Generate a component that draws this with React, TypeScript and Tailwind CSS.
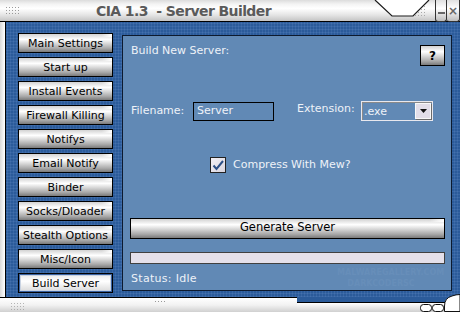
import React from 'react';

// --- skin pieces ---
const btnSkin =
  'border border-black bg-[linear-gradient(to_bottom,#d2d2d2_0%,#ffffff_30%,#d4d4d4_55%,#a8a8a8_80%,#7a7a7a_100%)] text-black';

const Dots = ({ className = '' }: { className?: string }) => (
  <svg className={className} width="16" height="9" viewBox="0 0 16 9">
    {[0, 1, 2].map((r) =>
      [0, 1, 2, 3, 4].map((c) => (
        <rect key={`${r}-${c}`} x={c * 3 + 1} y={r * 3 + 1} width="1" height="1" fill="#9a9a9a" />
      ))
    )}
  </svg>
);

const SkinButton = ({ label, active }: { label: string; active?: boolean }) => (
  <div
    className={`h-[20px] w-[95px] flex items-center justify-center text-[11px] leading-none relative ${
      active
        ? 'border border-black bg-[linear-gradient(to_bottom,#e8e8e8_0%,#ffffff_40%,#d8d8d8_100%)] shadow-[inset_0_0_0_1px_#3b62a0,inset_0_0_0_2px_#c9d3e2]'
        : btnSkin
    }`}
  >
    {!active && <span className="absolute right-0 top-0 w-[10px] h-[3px] bg-[linear-gradient(to_right,transparent,#ffffff)]" />}
    {label}
  </div>
);

const menu = [
  'Main Settings',
  'Start up',
  'Install Events',
  'Firewall Killing',
  'Notifys',
  'Email Notify',
  'Binder',
  'Socks/Dloader',
  'Stealth Options',
  'Misc/Icon',
  'Build Server',
];

export default function App() {
  return (
    <div className="w-[460px] h-[312px] overflow-hidden bg-white flex flex-col relative" style={{ fontFamily: '"DejaVu Sans", Verdana, sans-serif' }}>
      {/* Title bar */}
      <div className="h-[22px] relative flex border-b border-black bg-[linear-gradient(to_bottom,#dcdcdc_0%,#f4f4f4_20%,#ffffff_40%,#e6e6e6_70%,#c4c4c4_100%)]">
        <Dots className="absolute left-[5px] top-[6px]" />
        <div className="flex-1 pl-[96px] pt-[1px] text-[14px] font-bold text-[#5a5a5a] tracking-[-0.6px] leading-[20px]">
          CIA 1.3&nbsp; - Server Builder
        </div>
        {/* notch */}
        <svg className="absolute left-[370px] top-0" width="66" height="22" viewBox="0 0 66 22">
          <polygon points="5,0 22,16 43,16 59,0" fill="#ffffff" />
          <polyline points="5,0 22,16 43,16 59,0" fill="none" stroke="#1a1a1a" strokeWidth="1.2" />
          {[0, 1, 2, 3].map((i) => (
            <g key={i}>
              {[0, 1, 2, 3].slice(0, i + 1).map((j) => (
                <rect key={j} x={60 - i * 3 + j * 3 - 6} y={6 + i * 3} width="1" height="1" fill="#aaa" />
              ))}
            </g>
          ))}
        </svg>
        <div className="flex absolute right-0 top-0 h-[22px]">
          <div className="w-[12px] h-[22px] border-l border-r border-b border-[#333] rounded-b-[3px] bg-[linear-gradient(to_bottom,#e0e0e0,#ffffff_40%,#bdbdbd)] flex items-center justify-center">
            <span className="w-[7px] h-[2px] bg-[#666] mt-[5px]" />
          </div>
          <div className="w-[13px] h-[22px] border-r border-b border-[#333] rounded-b-[3px] bg-[linear-gradient(to_bottom,#e0e0e0,#ffffff_40%,#bdbdbd)] flex items-center justify-center text-[12px] font-bold text-[#666] leading-none">
            ×
          </div>
        </div>
      </div>

      {/* Body */}
      <div className="h-[275px] flex">
        <div className="w-[6px] border-r border-black bg-[linear-gradient(to_right,#d8d8d8,#ffffff)]" />
        <div className="flex-1 flex pl-[12px] pt-[11px] pr-[8px] bg-[#2b5b9a] bg-[radial-gradient(circle,#4370ad_0.9px,transparent_1.1px)] bg-[length:3px_3px]">
          {/* left menu */}
          <div className="flex flex-col gap-[4px]">
            {menu.map((m) => (
              <SkinButton key={m} label={m} active={m === 'Build Server'} />
            ))}
          </div>

          {/* main panel */}
          <div className="ml-[9px] mt-[2px] w-[330px] h-[256px] border border-[#0d1a2e] bg-[#6189b5] text-[#eef2f8] text-[11px] flex flex-col pl-[7px] pr-[6px] relative">
            {/* watermark */}
            <div className="absolute left-[214px] top-[231px] w-[88px] text-[8px] font-bold text-[#678eb9] leading-[11px] text-center">
              MALWAREGALLERY.COM
              <br />
              DARKCODERSC
            </div>

            <div className="flex justify-between items-start pt-[9px]">
              <span className="ml-[1px] -mt-[1px] leading-[13px]">Build New Server:</span>
              <div className={`${btnSkin} w-[25px] h-[21px] flex items-center justify-center text-[12px] font-bold leading-none`}>?</div>
            </div>

            <div className="flex items-center mt-[35px] h-[20px]">
              <span className="w-[63px] pl-[1px]">Filename:</span>
              <div className="w-[81px] h-[19px] border border-black flex items-center pl-[3px] pt-[1px]">Server</div>
              <span className="ml-[23px] w-[64px] -mt-[3px]">Extension:</span>
              <div className="w-[72px] h-[20px] border border-[#e8e8ee] shadow-[inset_1px_1px_0_#8a8a8a] flex items-center">
                <span className="flex-1 pl-[2px] pt-[2px]">.exe</span>
                <div className="w-[16px] h-[16px] mr-[1px] bg-[#e2dee9] border border-[#f8f8f8] shadow-[1px_1px_0_#6b6b6b] flex items-center justify-center">
                  <svg width="7" height="4" viewBox="0 0 7 4">
                    <polygon points="0,0 7,0 3.5,4" fill="#111" />
                  </svg>
                </div>
              </div>
            </div>

            <div className="flex items-center mt-[36px] pl-[80px] gap-[7px]">
              <div className="w-[16px] h-[16px] border border-[#222] bg-[linear-gradient(to_bottom_right,#f2f0f5,#d8d4de)] flex items-center justify-center">
                <svg width="12" height="11" viewBox="0 0 12 11">
                  <polyline points="1.5,5.5 4.5,9 11,1" fill="none" stroke="#2c4f86" strokeWidth="2" />
                </svg>
              </div>
              <span className="text-[11px]">Compress With Mew?</span>
            </div>

            <div className={`${btnSkin} mt-[44px] h-[21px] flex items-center justify-center text-[11.5px] relative`}>
              <span className="absolute right-0 top-0 w-[14px] h-[3px] bg-[linear-gradient(to_right,transparent,#ffffff)]" />
              Generate Server
            </div>

            <div className="mt-[13px] h-[12px] border border-[#404040] bg-[#e4e0ea]" />

            <div className="mt-[8px] ml-[1px] text-[11px] tracking-[0.3px] leading-[14px]">Status: Idle</div>
          </div>
        </div>
      </div>

      {/* Bottom bar */}
      <div className="h-[15px] flex relative">
        <div className="w-[297px] border-t border-black bg-[linear-gradient(to_bottom,#ffffff,#f2f2f2_50%,#d0d0d0)] relative">
          <Dots className="absolute left-[10px] top-[4px] opacity-70" />
          <div className="absolute left-[155px] top-[3px] flex gap-[2px]">
            {[0, 1, 2, 3].map((i) => (
              <span key={i} className="w-[1px] h-[1px] bg-[#999]" />
            ))}
          </div>
        </div>
        <div className="flex-1 flex flex-col">
          <div className="h-[5px] bg-[#2b5b9a]" />
          <div className="flex-1 border-t border-black bg-[linear-gradient(to_bottom,#ffffff,#d0d0d0)]" />
        </div>
        <svg className="absolute right-0 bottom-0" width="40" height="20" viewBox="0 0 40 20">
          <rect x="0.5" y="12.5" width="11" height="7" rx="3" fill="#fff" stroke="#111" />
          <rect x="12.5" y="12.5" width="11" height="7" rx="3" fill="#fff" stroke="#111" />
          <path d="M24.5 19.5 V14 Q24.5 6 32 4 Q36 2.5 40 2.5 V19.5 Z" fill="#fff" stroke="#111" />
        </svg>
      </div>
    </div>
  );
}
